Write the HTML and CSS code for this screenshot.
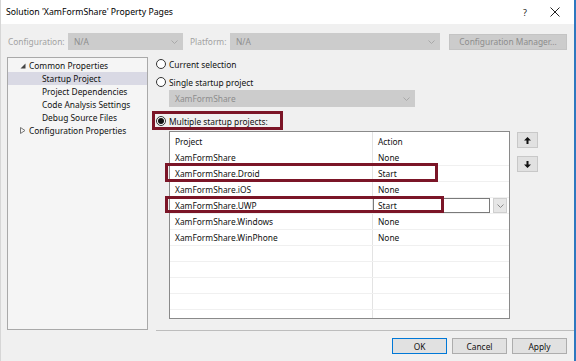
FILE: index.html
```html
<!DOCTYPE html>
<html lang="en">
<head>
    <meta charset="UTF-8">
    <title>Solution 'XamFormShare' Property Pages</title>
    <link rel="stylesheet" href="styles.css">
</head>
<body>
    <div class="window">
        <div class="titlebar">
            <span class="title">Solution 'XamFormShare' Property Pages</span>
            <span class="help">?</span>
            <span class="close">
                <svg width="10" height="10" viewBox="0 0 10 10"><path d="M0.5 0.5L9.5 9.5M9.5 0.5L0.5 9.5" stroke="#222" stroke-width="1" fill="none"/></svg>
            </span>
        </div>

        <div class="toolbar">
            <span class="lbl lbl-config">Configuration:</span>
            <div class="combo combo-config">
                <span>N/A</span>
                <svg class="chev" width="7" height="4" viewBox="0 0 7 4"><path d="M0.5 0.5L3.5 3.5L6.5 0.5" stroke="#a9a9a9" fill="none"/></svg>
            </div>
            <span class="lbl lbl-platform">Platform:</span>
            <div class="combo combo-platform">
                <span>N/A</span>
                <svg class="chev" width="7" height="4" viewBox="0 0 7 4"><path d="M0.5 0.5L3.5 3.5L6.5 0.5" stroke="#a9a9a9" fill="none"/></svg>
            </div>
            <div class="btn btn-manager">Configuration Manager...</div>
        </div>

        <div class="main">
            <div class="tree">
                <div class="node">
                    <svg class="tri" width="6" height="6" viewBox="0 0 6 6"><path d="M5.5 0.5L5.5 5.5L0.5 5.5Z" fill="#444"/></svg>
                    <span>Common Properties</span>
                </div>
                <div class="node child selected"><span>Startup Project</span></div>
                <div class="node child"><span>Project Dependencies</span></div>
                <div class="node child"><span>Code Analysis Settings</span></div>
                <div class="node child"><span>Debug Source Files</span></div>
                <div class="node">
                    <svg class="tri" width="6" height="7" viewBox="0 0 6 7"><path d="M0.5 0.5L5 3.5L0.5 6.5Z" fill="none" stroke="#777"/></svg>
                    <span>Configuration Properties</span>
                </div>
            </div>

            <div class="content">
                <div class="radio-row">
                    <span class="radio"></span>
                    <span>Current selection</span>
                </div>
                <div class="radio-row">
                    <span class="radio"></span>
                    <span>Single startup project</span>
                </div>
                <div class="combo combo-single">
                    <span>XamFormShare</span>
                    <svg class="chev" width="7" height="4" viewBox="0 0 7 4"><path d="M0.5 0.5L3.5 3.5L6.5 0.5" stroke="#a9a9a9" fill="none"/></svg>
                </div>
                <div class="radio-row radio-multi">
                    <span class="radio checked"></span>
                    <span>Multiple startup projects:</span>
                </div>

                <div class="grid-wrap">
                    <div class="grid">
                        <div class="grow ghead"><div class="c1">Project</div><div class="c2">Action</div></div>
                        <div class="grow"><div class="c1">XamFormShare</div><div class="c2">None</div></div>
                        <div class="grow"><div class="c1">XamFormShare.Droid</div><div class="c2">Start</div></div>
                        <div class="grow"><div class="c1">XamFormShare.iOS</div><div class="c2">None</div></div>
                        <div class="grow">
                            <div class="c1">XamFormShare.UWP</div>
                            <div class="c2 c2-edit">
                                <div class="editbox">Start</div>
                                <div class="dropbtn">
                                    <svg width="7" height="4" viewBox="0 0 7 4"><path d="M0.5 0.5L3.5 3.5L6.5 0.5" stroke="#888" fill="none"/></svg>
                                </div>
                            </div>
                        </div>
                        <div class="grow"><div class="c1">XamFormShare.Windows</div><div class="c2">None</div></div>
                        <div class="grow"><div class="c1">XamFormShare.WinPhone</div><div class="c2">None</div></div>
                        <div class="grow"><div class="c1"></div><div class="c2"></div></div>
                        <div class="grow"><div class="c1"></div><div class="c2"></div></div>
                        <div class="grow"><div class="c1"></div><div class="c2"></div></div>
                        <div class="grow"><div class="c1"></div><div class="c2"></div></div>
                        <div class="grow"><div class="c1"></div><div class="c2"></div></div>
                    </div>
                    <div class="movers">
                        <div class="mover">
                            <svg width="7" height="7" viewBox="0 0 7 7"><path d="M3.5 0L7 3.5H4.5V7H2.5V3.5H0Z" fill="#111"/></svg>
                        </div>
                        <div class="mover">
                            <svg width="7" height="7" viewBox="0 0 7 7"><path d="M3.5 7L7 3.5H4.5V0H2.5V3.5H0Z" fill="#111"/></svg>
                        </div>
                    </div>
                </div>
            </div>
        </div>

        <div class="footer">
            <div class="btn btn-ok">OK</div>
            <div class="btn">Cancel</div>
            <div class="btn">Apply</div>
        </div>

        <!-- annotation boxes drawn over the dialog -->
        <div class="mark mark-multi"></div>
        <div class="mark mark-droid"></div>
        <div class="mark mark-uwp"></div>
    </div>
</body>
</html>
```

FILE: styles.css
```css
* {
    margin: 0;
    padding: 0;
    box-sizing: border-box;
}
body {
    width: 576px;
    height: 361px;
    overflow: hidden;
    background: #f0f0f0;
    font-family: "Noto Sans", "Open Sans", sans-serif;
    font-size: 8.4px;
    color: #111;
}
.window {
    position: relative;
    width: 576px;
    height: 361px;
    background: #f0f0f0;
    border-right: 2px solid #2e78bf;
    border-left: 1px solid #d6d6d6;
}

/* title bar */
.titlebar {
    height: 24px;
    background: #fff;
    display: flex;
    align-items: center;
    padding-left: 5px;
}
.title {
    font-size: 8.7px;
    color: #000;
}
.help {
    margin-left: auto;
    width: 12px;
    text-align: center;
    font-size: 9px;
    color: #222;
}
.close {
    display: flex;
    margin-left: 19px;
    margin-right: 14px;
}

/* top toolbar */
.toolbar {
    display: flex;
    align-items: center;
    height: 17px;
    margin-top: 9px;
    padding-left: 7px;
}
.lbl {
    color: #a2a2a2;
}
.lbl-config {
    width: 60px;
}
.lbl-platform {
    width: 40px;
    margin-left: 7px;
}
.combo {
    display: flex;
    align-items: center;
    height: 17px;
    background: #cccccc;
    color: #8c8c8c;
    padding-left: 6px;
    padding-right: 5px;
}
.combo .chev {
    margin-left: auto;
}
.combo-config {
    width: 115px;
}
.combo-platform {
    width: 210px;
}
.btn {
    display: flex;
    align-items: center;
    justify-content: center;
    height: 16px;
    width: 55px;
    background: #e1e1e1;
    border: 1px solid #adadad;
    color: #111;
}
.btn-manager {
    width: 118px;
    margin-left: 9px;
    background: #cccccc;
    border-color: #c4c4c4;
    color: #8c8c8c;
}

/* tree + content */
.main {
    display: flex;
    margin-top: 7px;
    height: 273px;
}
.tree {
    width: 141px;
    margin-left: 6px;
    height: 273px;
    background: #f5f5f5;
    border: 1px solid #a9a9a9;
    padding-top: 1px;
}
.node {
    display: flex;
    align-items: center;
    height: 13px;
    padding-left: 10px;
}
.node .tri {
    width: 10px;
    margin-right: 1px;
}
.node.child {
    padding-left: 34px;
}
.node.selected {
    background: #d9d9e4;
}

.content {
    display: flex;
    flex-direction: column;
    padding-left: 8px;
}
.radio-row {
    display: flex;
    align-items: center;
    height: 14px;
    margin-bottom: 4px;
}
.radio {
    width: 10px;
    height: 10px;
    border: 1px solid #333;
    border-radius: 50%;
    background: #fff;
    margin-right: 3px;
    display: flex;
    align-items: center;
    justify-content: center;
}
.radio.checked::after {
    content: "";
    width: 6px;
    height: 6px;
    border-radius: 50%;
    background: #111;
}
.combo-single {
    width: 246px;
    height: 17px;
    margin-left: 13px;
    margin-top: -3px;
    margin-bottom: 7px;
}
.radio-multi {
    margin-bottom: 3px;
}

.grid-wrap {
    display: flex;
    align-items: flex-start;
    margin-left: 13px;
}
.grid {
    width: 341px;
    height: 188px;
    background: #fff;
    border: 1px solid #8a8a8a;
    overflow: hidden;
}
.grow {
    display: flex;
    height: 16px;
    border-bottom: 1px solid #f0f0f0;
}
.ghead {
    height: 18px;
    border-bottom: none;
}
.c1 {
    width: 203px;
    padding-left: 5px;
    display: flex;
    align-items: center;
    border-right: 1px solid #e3e3e3;
}
.c2 {
    flex: 1;
    padding-left: 5px;
    display: flex;
    align-items: center;
}
.c2-edit {
    padding-left: 0;
    padding-right: 1px;
}
.editbox {
    width: 117px;
    height: 15px;
    border: 1px solid #7a7a7a;
    display: flex;
    align-items: center;
    padding-left: 4px;
}
.dropbtn {
    width: 14px;
    height: 15px;
    margin-left: 3px;
    background: #e6e6e6;
    border: 1px solid #cfcfcf;
    display: flex;
    align-items: center;
    justify-content: center;
}
.movers {
    display: flex;
    flex-direction: column;
    gap: 8px;
    margin-left: 7px;
    margin-top: 1px;
}
.mover {
    width: 21px;
    height: 16px;
    background: #e1e1e1;
    border: 1px solid #c8c8c8;
    display: flex;
    align-items: center;
    justify-content: center;
}

/* footer */
.footer {
    display: flex;
    justify-content: flex-end;
    gap: 5px;
    margin-left: 155px;
    border-top: 1px solid #bdbdbd;
    padding-top: 7px;
    padding-right: 7px;
}
.btn-ok {
    border-color: #0078d7;
}

/* red annotation boxes */
.mark {
    position: absolute;
    border: 3px solid #7b1527;
}
.mark-multi {
    left: 151px;
    top: 111px;
    width: 131px;
    height: 19px;
}
.mark-droid {
    left: 164px;
    top: 163px;
    width: 273px;
    height: 19px;
}
.mark-uwp {
    left: 164px;
    top: 196px;
    width: 279px;
    height: 17px;
}
```
